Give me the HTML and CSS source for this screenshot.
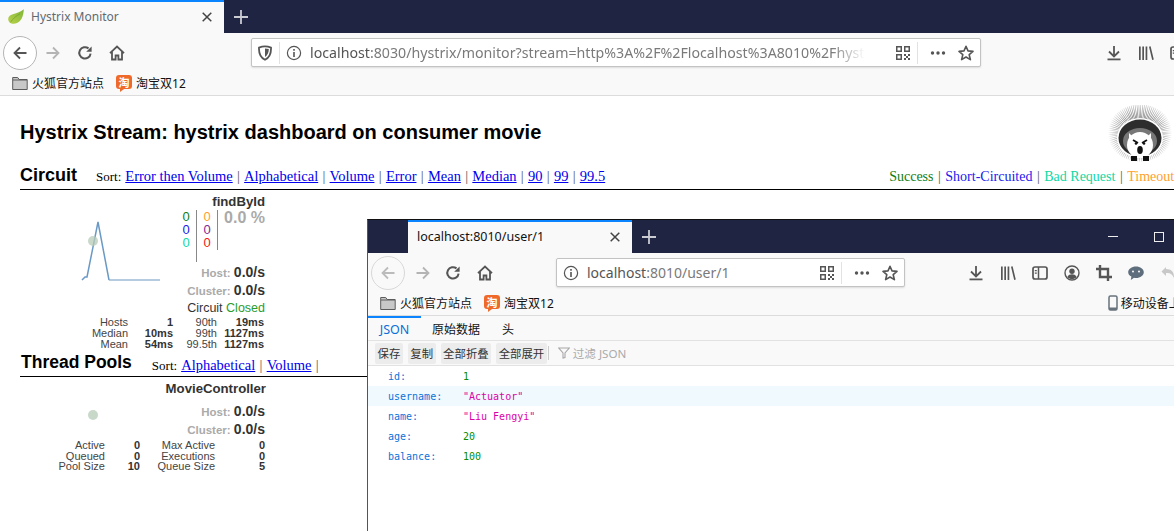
FILE: index.html
```html
<!DOCTYPE html>
<html lang="zh">
<head>
<meta charset="utf-8">
<title>Hystrix Monitor</title>
<link rel="stylesheet" href="styles.css">
</head>
<body>
<svg class="defs" width="0" height="0" aria-hidden="true">
  <defs>
    <linearGradient id="leafg" x1="0" y1="1" x2="1" y2="0">
      <stop offset="0" stop-color="#b9d34a"/>
      <stop offset="1" stop-color="#7fb53a"/>
    </linearGradient>
  </defs>
  <symbol id="i-back" viewBox="0 0 16 16"><path d="M14.5 8H2.5M8 2.500 2.500 8 8 13.500" fill="none" stroke="currentColor" stroke-width="1.800"/></symbol>
  <symbol id="i-fwd" viewBox="0 0 16 16"><path d="M1.500 8h12M8 2.500 13.500 8 8 13.500" fill="none" stroke="currentColor" stroke-width="1.800"/></symbol>
  <symbol id="i-reload" viewBox="0 0 16 16"><path d="M13.600 8.600A5.700 5.700 0 1 1 11.500 3.400" fill="none" stroke="currentColor" stroke-width="2"/><path d="M14.600 1.400v5.400H9.200z" fill="currentColor"/></symbol>
  <symbol id="i-home" viewBox="0 0 16 16"><path d="M1 8.200 8 1.600l7 6.600M3 6.600V14.500h3.600v-4h2.800v4H13V6.600" fill="none" stroke="currentColor" stroke-width="1.800"/></symbol>
  <symbol id="i-shield" viewBox="0 0 16 16"><path d="M2 2.600C6 1 10 1 14 2.600c.3 6-1.600 10-6 12.200C3.600 12.600 1.700 8.600 2 2.600z" fill="none" stroke="currentColor" stroke-width="1.800"/><path d="M8 3.500c1.400 0 2.700.2 3.800.6 0 3.500-1.200 6.200-3.800 7.800z" fill="currentColor"/></symbol>
  <symbol id="i-info" viewBox="0 0 16 16"><circle cx="8" cy="8" r="6.600" fill="none" stroke="currentColor" stroke-width="1.200"/><path d="M7.200 7h1.600v5H7.200zM7.200 4h1.600v1.700H7.200z" fill="currentColor"/></symbol>
  <symbol id="i-qr" viewBox="0 0 16 16"><path d="M1 1h6v6H1zM2.500 2.500v3h3v-3zM9 1h6v6H9zM10.500 2.500v3h3v-3zM1 9h6v6H1zM2.500 10.500v3h3v-3zM9 9h2v2H9zM13 9h2v2h-2zM11 11h2v2h-2zM9 13h2v2H9zM13 13h2v2h-2z" fill="currentColor" fill-rule="evenodd"/></symbol>
  <symbol id="i-dots" viewBox="0 0 16 16"><circle cx="2.500" cy="8" r="1.700" fill="currentColor"/><circle cx="8" cy="8" r="1.700" fill="currentColor"/><circle cx="13.500" cy="8" r="1.700" fill="currentColor"/></symbol>
  <symbol id="i-star" viewBox="0 0 16 16"><path d="M8 1.300l2 4.600 5 .5-3.800 3.300 1.200 4.900L8 12l-4.400 2.600 1.200-4.900L1 6.400l5-.5z" fill="none" stroke="currentColor" stroke-width="1.600" stroke-linejoin="round"/></symbol>
  <symbol id="i-down" viewBox="0 0 16 16"><path d="M8 1v10M3 6.500 8 11.500 13 6.500" fill="none" stroke="currentColor" stroke-width="1.800"/><path d="M1.500 13.500h13v1.800h-13z" fill="currentColor"/></symbol>
  <symbol id="i-lib" viewBox="0 0 16 16"><path d="M1 1.500h1.700V15H1zM4.300 1.500H6V15H4.300zM7.600 1.500h1.700V15H7.600zM11 1.800l1.600-.5 3.200 13.100-1.600.5z" fill="currentColor"/></symbol>
  <symbol id="i-side" viewBox="0 0 16 16"><rect x="1" y="2" width="14" height="12" rx="2" fill="none" stroke="currentColor" stroke-width="1.700"/><path d="M6.500 2v12" stroke="currentColor" stroke-width="1.500"/><path d="M2.800 5h2v1.200h-2zM2.800 7.500h2v1.200h-2z" fill="currentColor"/></symbol>
  <symbol id="i-user" viewBox="0 0 16 16"><circle cx="8" cy="8" r="7" fill="none" stroke="currentColor" stroke-width="1.400"/><circle cx="8" cy="6.300" r="2.700" fill="currentColor"/><path d="M3.300 12c1-2 2.800-2.700 4.700-2.700s3.700.7 4.700 2.700C11.500 13.500 9.800 14 8 14s-3.500-.5-4.700-2z" fill="currentColor"/></symbol>
  <symbol id="i-crop" viewBox="0 0 16 16"><path d="M4 0v12h12M0 4h12v12" fill="none" stroke="currentColor" stroke-width="2.400"/></symbol>
  <symbol id="i-chat" viewBox="0 0 16 16"><path d="M8 1.500c4.300 0 7.800 2.500 7.800 5.700S12.300 13 8 13c-.7 0-1.400-.1-2-.2L2.800 15l.6-3.400C1.300 10.500.2 9 .2 7.200.2 4 3.700 1.500 8 1.500z" fill="currentColor"/><circle cx="5" cy="6.500" r="1" fill="#f9f9fa"/><circle cx="11" cy="6.500" r="1" fill="#f9f9fa"/></symbol>
  <symbol id="i-undo" viewBox="0 0 16 16"><path d="M6 2 1.500 6.500 6 11V8c4-.4 6.500.8 7.800 5 .8-5.500-2-9-7.800-9z" fill="currentColor"/></symbol>
  <symbol id="i-folder" viewBox="0 0 16 16"><path d="M.7 2.500h5l1.500 2h8v10H.7z" fill="#c8c8c8" stroke="#5c5c5c" stroke-width="1"/><path d="M1 5h14" stroke="#5c5c5c"/></symbol>
  <symbol id="i-x" viewBox="0 0 10 10"><path d="M.7.700l8.600 8.600M9.300.700.700 9.300" stroke="currentColor" stroke-width="1.500"/></symbol>
  <symbol id="i-plus" viewBox="0 0 14 14"><path d="M7 0v14M0 7h14" stroke="currentColor" stroke-width="1.800"/></symbol>
  <symbol id="i-phone" viewBox="0 0 10 16"><rect x="1" y="1" width="8" height="14" rx="1.500" fill="none" stroke="#67727c" stroke-width="1.500"/><path d="M1 12.500h8V15H1z" fill="#67727c"/></symbol>
  <symbol id="i-funnel" viewBox="0 0 12 12"><path d="M.8 1h10.400L7 6v4.500L5 11V6z" fill="none" stroke="#a8a8a8" stroke-width="1.100"/></symbol>
</svg>

<div class="win main-win">
  <div class="tabstrip">
    <div class="tab tab-main">
      <svg class="leaf" viewBox="0 0 16 15"><path d="M15.800.3C15.600 7 13 14.500 6 14.800 2.500 15 .2 12.800.2 10 .2 4.500 9.500 5.500 15.800.3z" fill="url(#leafg)"/><path d="M2.500 13.300c2.500-4 6-6.500 9.500-8.500" stroke="#6e9c2a" stroke-width=".7" fill="none"/></svg>
      <span class="tab-title grey">Hystrix Monitor</span>
      <svg class="close"><use href="#i-x"/></svg>
    </div>
    <svg class="plus"><use href="#i-plus"/></svg>
  </div>
  <div class="nav">
    <span class="backbtn"><svg class="ico"><use href="#i-back"/></svg></span>
    <svg class="ico fwd"><use href="#i-fwd"/></svg>
    <svg class="ico"><use href="#i-reload"/></svg>
    <svg class="ico"><use href="#i-home"/></svg>
    <div class="url url-main">
      <svg class="ico"><use href="#i-shield"/></svg>
      <i class="urlsep"></i>
      <svg class="ico"><use href="#i-info"/></svg>
      <span class="urltext fade">localhost<span class="greyurl">:8030/hystrix/monitor?stream=http%3A%2F%2Flocalhost%3A8010%2Fhyst</span></span>
      <svg class="ico qr"><use href="#i-qr"/></svg>
      <i class="urlsep"></i>
      <svg class="ico dots"><use href="#i-dots"/></svg>
      <svg class="ico star"><use href="#i-star"/></svg>
    </div>
    <svg class="ico tool-first"><use href="#i-down"/></svg>
    <svg class="ico"><use href="#i-lib"/></svg>
    <svg class="ico"><use href="#i-side"/></svg>
  </div>
  <div class="bookmarks">
    <svg class="ico-bm"><use href="#i-folder"/></svg><span class="bm-label">火狐官方站点</span>
    <span class="tb">淘</span><span>淘宝双12</span>
  </div>

  <main class="dash">
    <div class="dash-title">
      <h1>Hystrix Stream: hystrix dashboard on consumer movie</h1>
      <svg class="hog" viewBox="0 0 68 58">
        <defs>
          <radialGradient id="spike" gradientUnits="userSpaceOnUse" cx="34" cy="28" r="32">
            <stop offset=".5" stop-color="#444"/>
            <stop offset="1" stop-color="#fff"/>
          </radialGradient>
        </defs>
        <ellipse cx="34" cy="28" rx="24" ry="20" fill="none" stroke="url(#spike)" stroke-width="17" stroke-dasharray=".6 .9"/>
        <ellipse cx="34" cy="33" rx="23" ry="20" fill="#fff"/>
        <ellipse cx="34" cy="33" rx="21.500" ry="18.500" fill="#2d2d2d"/>
        <ellipse cx="34" cy="36" rx="17" ry="13" fill="#777"/>
        <circle cx="34" cy="40" r="13" fill="#fff"/>
        <path d="M23 28l4 4-4 1zM45 28l-4 4 4 1z" fill="#fff"/>
        <path d="M27 35l5 3M41 35l-5 3" stroke="#111" stroke-width="1.800"/>
        <circle cx="30" cy="38.500" r="1.300" fill="#111"/><circle cx="38" cy="38.500" r="1.300" fill="#111"/>
        <ellipse cx="34" cy="45" rx="2.800" ry="4" fill="#111"/>
        <path d="M25 51h6v5h-6zM37 51h6v5h-6z" fill="#111"/>
      </svg>
    </div>

    <section class="head-row">
      <h2>Circuit</h2>
      <div class="sort sort-c"><span class="sort-word">Sort:</span><a href="#">Error then Volume</a><b>|</b><a href="#">Alphabetical</a><b>|</b><a href="#">Volume</a><b>|</b><a href="#">Error</a><b>|</b><a href="#">Mean</a><b>|</b><a href="#">Median</a><b>|</b><a href="#">90</a><b>|</b><a href="#">99</a><b>|</b><a href="#">99.5</a></div>
      <div class="legend"><span class="c-green">Success</span><b>|</b><span class="c-blue">Short-Circuited</span><b>|</b><span class="c-teal">Bad Request</span><b>|</b><span class="c-orange">Timeout</span></div>
    </section>

    <article class="card">
      <div class="card-top">
        <svg class="chart" width="145" height="120" viewBox="20 190 145 120">
          <path d="M109 280H160" fill="none" stroke="#9bbad6" stroke-width="1.500"/>
          <path d="M82 280l3-3h2l11-55 11 58" fill="none" stroke="#6a99c5" stroke-width="1.500"/>
          <circle cx="93" cy="241" r="5" fill="#b7cbb7" fill-opacity=".75"/>
        </svg>
        <div class="stats">
          <div class="cb-title">findById</div>
          <div class="counts">
            <div class="count-col"><span class="c-green">0</span><span class="c-blue">0</span><span class="c-teal">0</span></div>
            <div class="count-col tall"><span class="c-orange">0</span><span class="c-purple">0</span><span class="c-red">0</span></div>
            <div class="pct">0.0 %</div>
          </div>
          <div class="rate rate-first">Host: <strong>0.0/s</strong></div>
          <div class="rate">Cluster: <strong>0.0/s</strong></div>
          <div class="circuit">Circuit <span class="c-closed">Closed</span></div>
        </div>
      </div>
      <div class="mini mini-c">
        <span>Hosts</span><b>1</b><span>90th</span><b>19ms</b>
        <span>Median</span><b>10ms</b><span>99th</span><b>1127ms</b>
        <span>Mean</span><b>54ms</b><span>99.5th</span><b>1127ms</b>
      </div>
    </article>

    <section class="head-row head-row-t">
      <h2>Thread Pools</h2>
      <div class="sort sort-t"><span class="sort-word">Sort:</span><a href="#">Alphabetical</a><b>|</b><a href="#">Volume</a><b>|</b></div>
    </section>

    <article class="card">
      <div class="cb-title pool-title">MovieController</div>
      <div class="pool-top">
        <span class="dot"></span>
        <div>
          <div class="rate">Host: <strong>0.0/s</strong></div>
          <div class="rate">Cluster: <strong>0.0/s</strong></div>
        </div>
      </div>
      <div class="mini mini-t">
        <span>Active</span><b>0</b><span>Max Active</span><b>0</b>
        <span>Queued</span><b>0</b><span>Executions</span><b>0</b>
        <span>Pool Size</span><b>10</b><span>Queue Size</span><b>5</b>
      </div>
    </article>
  </main>
</div>

<div class="win json-win">
  <div class="tabstrip tabstrip-2">
    <div class="tab tab-json">
      <span class="tab-title">localhost:8010/user/1</span>
      <svg class="close"><use href="#i-x"/></svg>
    </div>
    <svg class="plus"><use href="#i-plus"/></svg>
    <i class="win-min"></i>
    <i class="win-max"></i>
  </div>
  <div class="nav nav-2">
    <span class="backbtn off"><svg class="ico"><use href="#i-back"/></svg></span>
    <svg class="ico fwd"><use href="#i-fwd"/></svg>
    <svg class="ico reload-2"><use href="#i-reload"/></svg>
    <svg class="ico"><use href="#i-home"/></svg>
    <div class="url url-json">
      <svg class="ico"><use href="#i-info"/></svg>
      <span class="urltext">localhost<span class="greyurl">:8010/user/1</span></span>
      <svg class="ico qr"><use href="#i-qr"/></svg>
      <i class="urlsep"></i>
      <svg class="ico dots"><use href="#i-dots"/></svg>
      <svg class="ico star"><use href="#i-star"/></svg>
    </div>
    <svg class="ico tool-first-2"><use href="#i-down"/></svg>
    <svg class="ico"><use href="#i-lib"/></svg>
    <svg class="ico"><use href="#i-side"/></svg>
    <svg class="ico"><use href="#i-user"/></svg>
    <svg class="ico"><use href="#i-crop"/></svg>
    <svg class="ico chat"><use href="#i-chat"/></svg>
    <svg class="ico undo"><use href="#i-undo"/></svg>
  </div>
  <div class="bookmarks bookmarks-2">
    <svg class="ico-bm"><use href="#i-folder"/></svg><span class="bm-label">火狐官方站点</span>
    <span class="tb">淘</span><span>淘宝双12</span>
    <svg class="phone"><use href="#i-phone"/></svg><span>移动设备上</span>
  </div>
  <div class="json-tabs">
    <span class="jt active">JSON</span>
    <span class="jt">原始数据</span>
    <span class="jt">头</span>
  </div>
  <div class="json-tools">
    <span class="btn">保存</span>
    <span class="btn">复制</span>
    <span class="btn">全部折叠</span>
    <span class="btn">全部展开</span>
    <i class="tool-sep"></i>
    <svg class="funnel"><use href="#i-funnel"/></svg>
    <span class="filter">过滤 JSON</span>
  </div>
  <div class="json-body">
    <div class="jr"><span class="k">id:</span><span class="n">1</span></div>
    <div class="jr hl"><span class="k">username:</span><span class="s">"Actuator"</span></div>
    <div class="jr"><span class="k">name:</span><span class="s">"Liu Fengyi"</span></div>
    <div class="jr"><span class="k">age:</span><span class="n">20</span></div>
    <div class="jr"><span class="k">balance:</span><span class="n">100</span></div>
  </div>
</div>
</body>
</html>
```

FILE: styles.css
```css
* { box-sizing: border-box; }
html, body { margin: 0; height: 100%; }
body {
  position: relative;
  width: 1174px;
  height: 531px;
  overflow: hidden;
  background: #fff;
  font-family: "Noto Sans", "Noto Sans CJK SC", sans-serif;
  color: #111;
}
.defs { position: absolute; }
.win { background: #fff; }
.main-win { width: 1174px; height: 531px; overflow: hidden; }

/* browser chrome */
.tabstrip { display: flex; align-items: center; height: 33px; background: #1f2442; color: #c9cad2; }
.tab {
  display: flex; align-items: center; flex: none;
  width: 224px; height: 33px;
  padding-bottom: 2px;
  background: #f9f9fa;
  border-top: 2px solid #0a84ff;
  color: #333;
}
.tab-main { padding-left: 8px; padding-right: 12px; }
.leaf { width: 16px; height: 15px; margin-right: 7px; flex: none; }
.tab-title { flex: 1; font-size: 12px; white-space: nowrap; }
.grey { color: #5f6a73; }
.close { width: 10px; height: 10px; flex: none; color: #444; }
.plus { width: 14px; height: 14px; margin-left: 10px; flex: none; color: #c9cad2; }

.nav { display: flex; align-items: center; gap: 16px; height: 38px; padding-left: 3px; padding-top: 1px; background: #f9f9fa; color: #555; }
.ico { width: 16px; height: 16px; flex: none; color: #555; }
.backbtn {
  display: flex; align-items: center; justify-content: center; flex: none;
  width: 34px; height: 34px; margin-right: -8px;
  border: 1px solid #b5b5b5; border-radius: 50%; background: #fff;
}
.fwd { color: #b4b4b4; }
.url {
  display: flex; align-items: center; flex: none;
  height: 29px; background: #fff;
  border: 1px solid #c3c3c3; border-radius: 2px;
  box-shadow: 0 1px 2px rgba(0,0,0,.12);
}
.url-main { width: 730px; margin-left: 110px; padding-left: 5px; }
.urlsep { width: 1px; height: 22px; background: #e2e2e2; margin: 0 6px; flex: none; }
.urltext { font-size: 14px; margin-left: 8px; white-space: nowrap; overflow: hidden; flex: 1; }
.fade {
  -webkit-mask-image: linear-gradient(to right, #000 94%, transparent 100%);
  mask-image: linear-gradient(to right, #000 94%, transparent 100%);
  flex: none; width: 555px; font-size: 14.200px;
}
.greyurl { color: #7a7a7a; }
.qr { margin-left: auto; }
.url-main .qr { margin-left: 30px; }
.dots { margin: 0 6px; }
.star { margin: 0 6px; }
.tool-first { margin-left: 109px; }

.bookmarks { display: flex; align-items: center; height: 25px; padding-left: 12px; background: #f9f9fa; border-bottom: 1px solid #dcdcdc; font-size: 12px; color: #111; }
.ico-bm { width: 16px; height: 16px; margin-right: 4px; flex: none; }
.bm-label { margin-right: 12px; }
.tb {
  position: relative;
  display: flex; align-items: center; justify-content: center; flex: none;
  width: 16px; height: 14px; margin-right: 4px; margin-bottom: 2px;
  background: #ef6a2a; border-radius: 3px; color: #fff; font-size: 11px; font-weight: 700;
}
.tb::after {
  content: ""; position: absolute; left: 4px; bottom: -3px;
  border-top: 3px solid #ef6a2a; border-right: 4px solid transparent;
}

/* dashboard */
.dash { padding: 25px 0 0 20px; background: #fff; font-family: "Liberation Sans", Arial, sans-serif; color: #333; }
.dash-title { display: flex; align-items: flex-start; height: 45px; }
.dash-title h1 { margin: 0; font-size: 20px; line-height: 23px; color: #000; font-weight: 700; }
.hog { width: 68px; height: 58px; position: absolute; left: 1106px; top: 105px; }
.head-row { display: flex; align-items: flex-start; width: 1250px; height: 24px; border-bottom: 1px solid #000; white-space: nowrap; }
.head-row h2 { margin: -1px 0 0; font-size: 18px; line-height: 20px; color: #000; font-weight: 700; }
.sort { font-family: "Liberation Serif", serif; font-size: 14.500px; line-height: 18px; color: #000; }
.sort-word { font-size: 13px; margin-right: 4px; }
.sort-c { margin-left: 19px; margin-top: 1px; }
.sort a { color: #00e; }
.sort b, .legend b { font-weight: 400; margin: 0 4.250px; color: #555; }
.legend b { margin: 0 4.500px; }
.legend { font-family: "Liberation Serif", serif; font-size: 14px; line-height: 18px; margin-top: 2px; margin-left: 284px; }
.c-green { color: #117e11; }
.c-blue { color: #2020ee; }
.c-teal { color: #10d8a5; }
.c-orange { color: #ffa030; }
.c-purple { color: #7e2a94; }
.c-red { color: #f01818; }
.c-closed { color: #2c9c2c; }

.card { width: 246px; }
.card-top { display: flex; height: 127px; }
.chart { flex: none; display: block; }
.stats { width: 100px; flex: none; text-align: right; padding-top: 5px; }
.cb-title { font-size: 13.200px; line-height: 14px; font-weight: 700; color: #333; text-align: right; white-space: nowrap; }
.counts { display: flex; height: 52px; margin-top: 1px; margin-left: 11px; text-align: left; }
.count-col { width: 21px; height: 52px; display: flex; flex-direction: column; align-items: center; font-size: 13px; line-height: 13px; border-right: 1px solid #888; flex: none; }
.count-col.tall { height: 40px; }
.pct { flex: 1; text-align: right; font-size: 16px; line-height: 16px; font-weight: 700; color: #aaa; white-space: nowrap; }
.rate { font-size: 11.500px; line-height: 17px; font-weight: 700; color: #aaa; white-space: nowrap; }
.rate strong { font-size: 14px; color: #333; }
.rate-first { margin-top: 2px; }
.circuit { font-size: 12.500px; line-height: 16px; color: #333; white-space: nowrap; }

.mini { display: grid; font-size: 11px; line-height: 11px; text-align: right; white-space: nowrap; color: #444; }
.mini b { color: #333; }
.mini-c { grid-template-columns: 108px 45px 44px 47px; }
.mini-t { grid-template-columns: 85px 35px 75px 50px; margin-top: 1px; line-height: 10.500px; }

.head-row-t { width: 1174px; margin-top: 3px; }
.head-row-t h2 { margin-left: 1px; font-size: 17.500px; }
.sort-t { margin-left: 20px; margin-top: 3px; }
.pool-title { margin-top: 5px; }
.pool-top { display: flex; justify-content: flex-end; align-items: center; position: relative; width: 245px; margin-top: 7px; height: 36px; text-align: right; }
.dot { position: absolute; left: 68px; top: 7px; width: 10px; height: 10px; border-radius: 50%; background: #c9d9c9; }

/* JSON window */
.json-win {
  position: absolute; left: 367px; top: 219px;
  width: 830px; height: 330px;
  border-top: 1px solid #111;
  border-left: 1px solid #555;
  overflow: hidden;
}
.tab-json { margin-left: 40px; padding-left: 9px; padding-right: 10px; }
.tab-json .tab-title { color: #111; font-size: 12.500px; }
.tab-json .close { margin-right: 2px; }
.win-min { width: 10px; height: 1px; background: #eee; margin-left: 452px; flex: none; }
.win-max { width: 10px; height: 10px; border: 1px solid #eee; margin-left: 36px; flex: none; }
.nav-2 .url-json { width: 349px; margin-left: 47px; padding-left: 6px; }
.nav-2 .backbtn { margin-right: -6px; }
.reload-2 { margin-left: -2px; }
.backbtn.off { background: #f9f9fa; border-color: #d8d8d8; }
.backbtn.off .ico { color: #bbb; }
.tool-first-2 { margin-left: 47px; }
.chat { color: #5e6e7c; }
.undo { color: #c8c8c8; }
.phone { width: 10px; height: 16px; margin-left: 554px; margin-right: 3px; flex: none; }

.json-tabs { display: flex; height: 25px; background: #f9f9fa; border-bottom: 1px solid #e2e2e2; font-size: 12px; align-items: stretch; }
.jt { display: flex; align-items: center; border-top: 2px solid transparent; margin-right: 22px; }
.jt.active { width: 53px; justify-content: center; color: #0a6fd8; border-top-color: #0a84ff; margin-right: 11px; font-size: 12.500px; }
.json-tools { display: flex; align-items: center; gap: 5px; height: 25px; padding-left: 7px; background: #f9f9fa; border-bottom: 1px solid #e2e2e2; font-size: 11.400px; }
.btn { height: 21px; line-height: 21px; padding: 0 2.500px; background: #ececec; border-radius: 2px; color: #333; }
.tool-sep { width: 1px; height: 14px; background: #ccc; margin-left: -4px; }
.funnel { width: 12px; height: 12px; margin-left: 4px; flex: none; }
.filter { color: #aaa; margin-left: -2px; font-size: 11.600px; }
.json-body { font-family: "DejaVu Sans Mono", monospace; font-size: 10px; }
.jr { display: flex; height: 20px; line-height: 21px; padding-left: 20px; }
.jr.hl { background: #f0f9fe; }
.k { width: 75px; color: #0a72d8; flex: none; }
.n { color: #058b00; }
.s { color: #dd00a9; }
```
